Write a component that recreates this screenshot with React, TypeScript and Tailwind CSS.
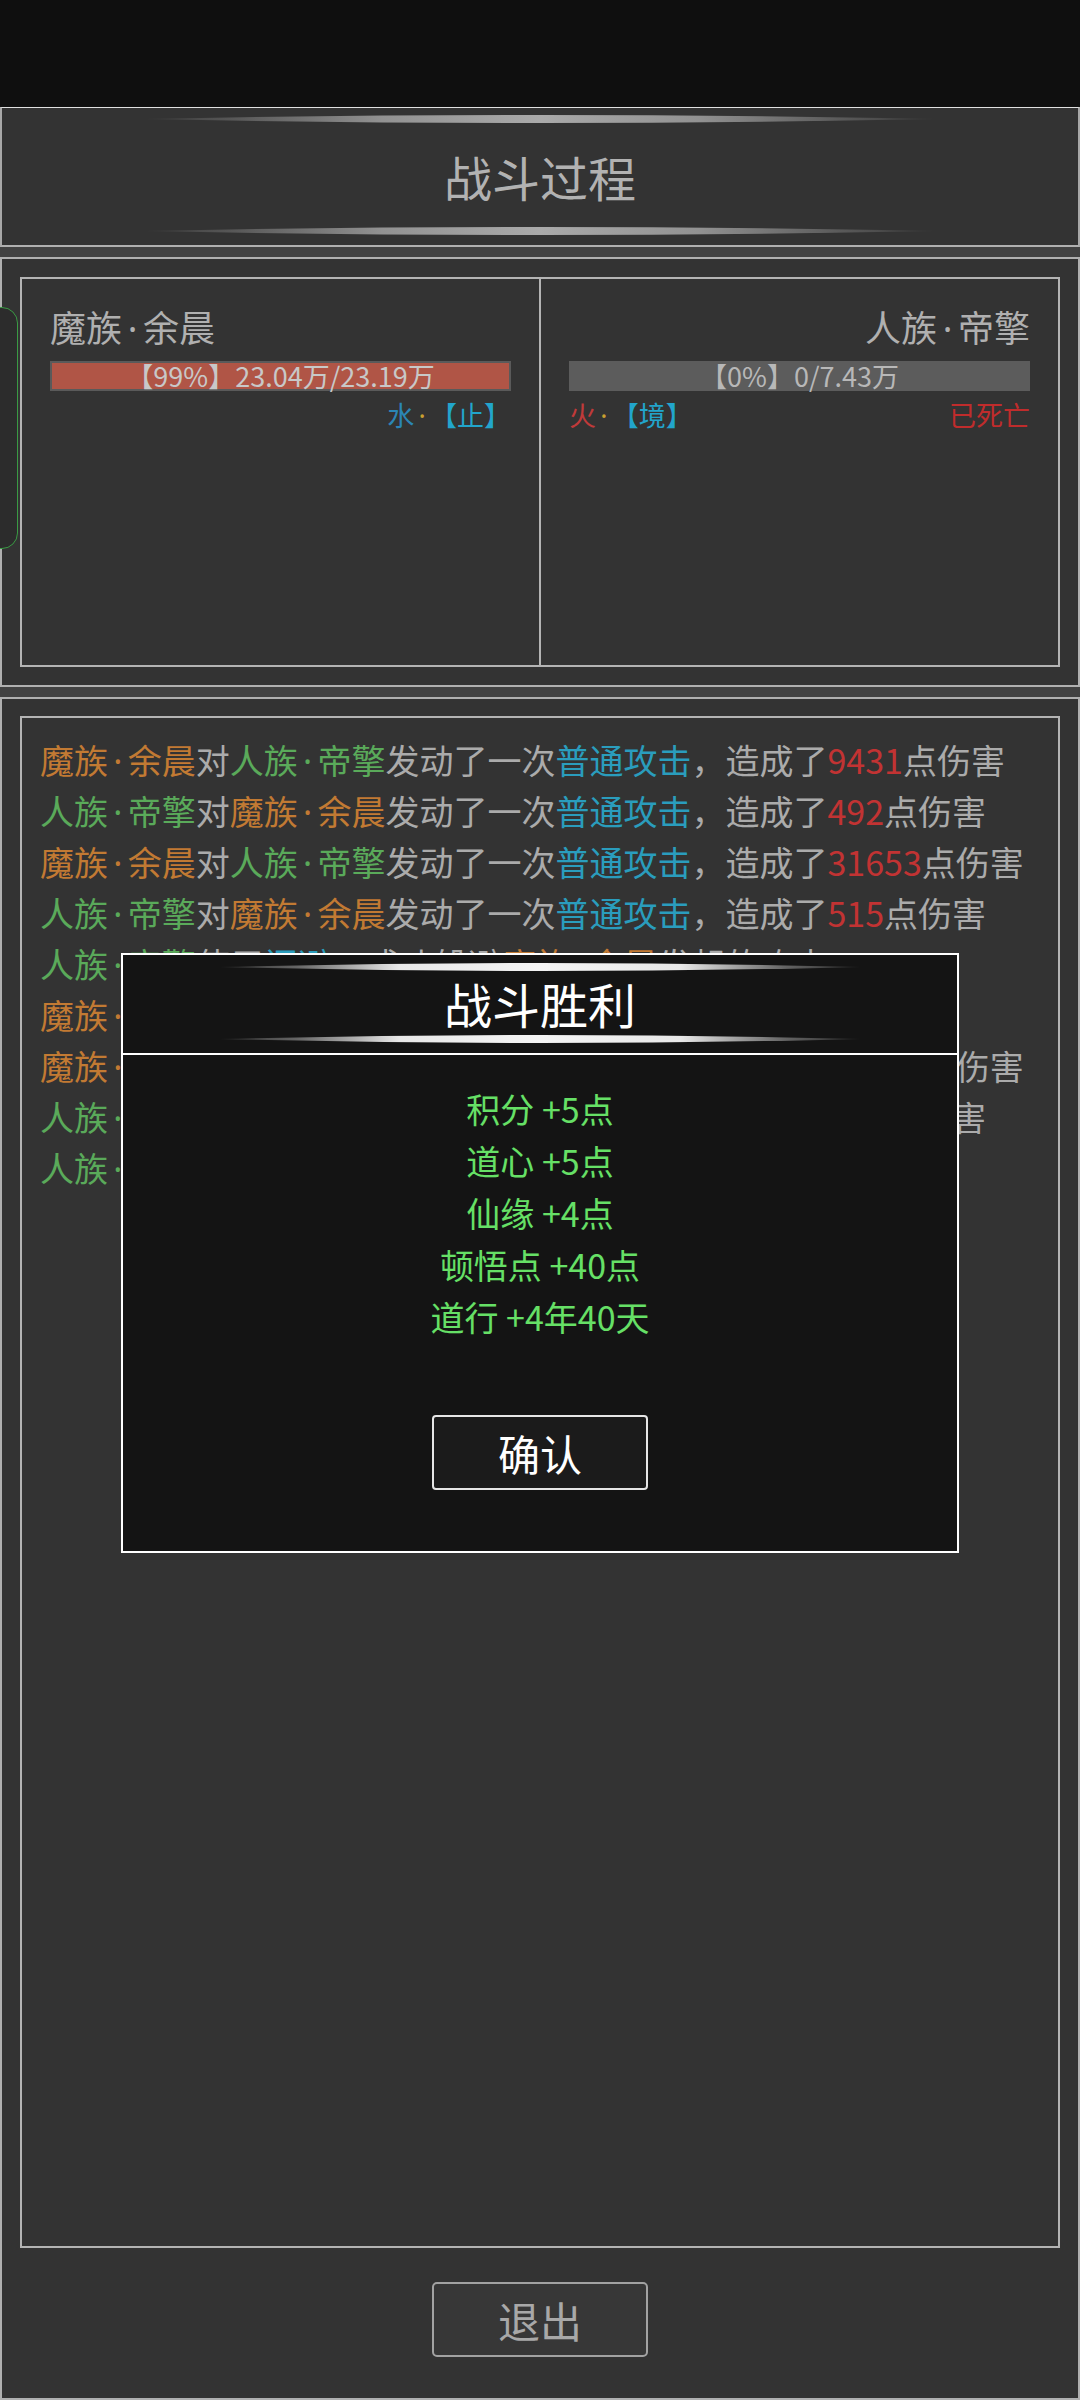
import React from "react";

type Seg = [string, string];

const O = "text-[#c27a33]";
const G = "text-[#5aaa5a]";
const W = "text-[#ababab]";
const C = "text-[#2a9dbd]";
const R = "text-[#c23333]";

const lines: Seg[][] = [
  [[O, "魔族·余晨"], [W, "对"], [G, "人族·帝擎"], [W, "发动了一次"], [C, "普通攻击"], [W, "，造成了"], [R, "9431"], [W, "点伤害"]],
  [[G, "人族·帝擎"], [W, "对"], [O, "魔族·余晨"], [W, "发动了一次"], [C, "普通攻击"], [W, "，造成了"], [R, "492"], [W, "点伤害"]],
  [[O, "魔族·余晨"], [W, "对"], [G, "人族·帝擎"], [W, "发动了一次"], [C, "普通攻击"], [W, "，造成了"], [R, "31653"], [W, "点伤害"]],
  [[G, "人族·帝擎"], [W, "对"], [O, "魔族·余晨"], [W, "发动了一次"], [C, "普通攻击"], [W, "，造成了"], [R, "515"], [W, "点伤害"]],
  [[G, "人族·帝擎"], [W, "使用"], [C, "闪避"], [W, "，成功躲避"], [O, "魔族·余晨"], [W, "发起的攻击"]],
  [[O, "魔族·余晨"], [W, "恢复了"], [R, "1280"], [W, "点气血"]],
  [[O, "魔族·余晨"], [W, "对"], [G, "人族·帝擎"], [W, "发动了一次"], [C, "普通攻击"], [W, "，造成了"], [R, "28765"], [W, "点伤害"]],
  [[G, "人族·帝擎"], [W, "对"], [O, "魔族·余晨"], [W, "发动了一次"], [C, "普通攻击"], [W, "，造成了"], [R, "503"], [W, "点伤害"]],
  [[G, "人族·帝擎"], [W, "气血耗尽，已死亡"]],
];

function Lens({ w, h, id, stops }: { w: number; h: number; id: string; stops: [string, string][] }) {
  const m = h / 2;
  return (
    <svg width={w} height={h} viewBox={`0 0 ${w} ${h}`} className="block">
      <defs>
        <linearGradient id={id} x1="0" y1="0" x2="1" y2="0">
          {stops.map(([o, c]) => (
            <stop key={o} offset={o} stopColor={c} />
          ))}
        </linearGradient>
      </defs>
      <path
        d={`M0 ${m} Q ${w / 2} ${-m} ${w} ${m} Q ${w / 2} ${h + m} 0 ${m} Z`}
        fill={`url(#${id})`}
      />
    </svg>
  );
}

const grayStops: [string, string][] = [
  ["0", "#3a3a3a"],
  ["0.12", "#5a5a5a"],
  ["0.3", "#929292"],
  ["0.5", "#aaaaaa"],
  ["0.7", "#929292"],
  ["0.88", "#5a5a5a"],
  ["1", "#3a3a3a"],
];

const whiteStops: [string, string][] = [
  ["0", "#2a2a2a"],
  ["0.12", "#666666"],
  ["0.28", "#e8e8e8"],
  ["0.5", "#f4f4f4"],
  ["0.72", "#e8e8e8"],
  ["0.88", "#666666"],
  ["1", "#2a2a2a"],
];

function Dot({ cls }: { cls: string }) {
  return (
    <span className={`inline-block w-[0.58em] text-center leading-[1] font-['Noto_Sans',sans-serif] ${cls}`}>·</span>
  );
}

function Name({ text, cls }: { text: string; cls: string }) {
  const [a, b] = text.split("·");
  return (
    <span className={cls}>
      {a}
      <Dot cls={cls} />
      {b}
    </span>
  );
}

export default function App() {
  return (
    <div className="relative w-[1080px] h-[2400px] overflow-hidden bg-[#424242] font-['Noto_Sans_CJK_SC','Noto_Sans',sans-serif]">
      <div className="h-[107px] bg-[#0f0f0f]" />

      {/* header */}
      <div className="h-[140px] bg-[#333333] border-x-2 border-b-2 border-t border-x-[#a8a8a8] border-b-[#b0b0b0] border-t-[#e0e0e0] flex flex-col items-center">
        <div className="mt-[7px]">
          <Lens w={790} h={8} id="hl1" stops={grayStops} />
        </div>
        <div className="mt-[17px] h-[72px] leading-[72px] text-[48px] text-[#b2b2b2]">战斗过程</div>
        <div className="mt-[15px]">
          <Lens w={790} h={8} id="hl2" stops={grayStops} />
        </div>
      </div>

      {/* fighters */}
      <div className="mt-[10px] h-[430px] bg-[#333333] border-2 border-[#b0b0b0] p-[18px]">
        <div className="relative h-[390px] border-2 border-[#b4b4b4] flex">
          <div className="flex-1 border-r-2 border-[#b4b4b4] px-[28px] pt-[20px]">
            <div className="h-[54px] text-[36px] leading-[54px] text-[#b0b0b0]">
              <Name text="魔族·余晨" cls="" />
            </div>
            <div className="mt-[8px] h-[30px] bg-[#b05546] border-2 border-[#5a5a5a] flex items-center justify-center text-[27px] leading-[26px] text-[#c8c8c8]">
              【99%】23.04万/23.19万
            </div>
            <div className="mt-[6px] h-[36px] flex justify-end items-baseline text-[27px] leading-[36px]">
              <span className="text-[#2b86b6]">水</span>
              <Dot cls="text-[#c9a030]" />
              <span className="text-[#22a5cc]">【止】</span>
            </div>
          </div>
          <div className="flex-1 px-[28px] pt-[20px]">
            <div className="h-[54px] text-[36px] leading-[54px] text-[#b0b0b0] text-right">
              <Name text="人族·帝擎" cls="" />
            </div>
            <div className="mt-[8px] h-[30px] bg-[#5c5c5c] flex items-center justify-center text-[27px] leading-[26px] text-[#b8b8b8]">
              【0%】0/7.43万
            </div>
            <div className="mt-[6px] h-[36px] flex justify-between items-baseline text-[27px] leading-[36px]">
              <div className="flex items-baseline">
                <span className="text-[#c03a3a]">火</span>
                <Dot cls="text-[#c9a030]" />
                <span className="text-[#22a5cc]">【境】</span>
              </div>
              <span className="text-[#c02c2c]">已死亡</span>
            </div>
          </div>
        </div>
      </div>

      {/* green side tab */}
      <div className="absolute left-[-22px] top-[307px] w-[40px] h-[242px] rounded-[16px] border border-[#3a9a44] bg-[#2c2c2c]" />

      {/* log */}
      <div className="mt-[10px] h-[1703px] bg-[#333333] border-2 border-[#b0b0b0] pt-[17px] px-[18px] flex flex-col items-center">
        <div className="w-full h-[1532px] border-2 border-[#b4b4b4] pt-[16px] pl-[18px] text-[34px] leading-[51px]">
          {lines.map((segs, i) => (
            <div key={i} className="h-[51px] whitespace-nowrap">
              {segs.map(([cls, t], j) =>
                t.includes("·") ? (
                  <Name key={j} text={t} cls={cls} />
                ) : (
                  <span key={j} className={cls}>
                    {t}
                  </span>
                )
              )}
            </div>
          ))}
        </div>
        <button className="mt-[34px] w-[216px] h-[75px] rounded-[5px] border-2 border-[#a2a2a2] bg-[#373737] text-[42px] leading-[42px] text-[#a8a8a8] font-['Noto_Sans_CJK_SC',sans-serif]">
          退出
        </button>
      </div>

      {/* victory modal */}
      <div className="absolute left-[121px] top-[953px] w-[838px] h-[600px] border-2 border-white bg-[#141414] flex flex-col">
        <div className="h-[100px] border-b-2 border-white flex flex-col items-center">
          <div className="mt-[8px]">
            <Lens w={640} h={8} id="ml1" stops={whiteStops} />
          </div>
          <div className="mt-[2px] h-[60px] leading-[60px] text-[48px] text-white">战斗胜利</div>
          <div className="mt-[2px]">
            <Lens w={640} h={8} id="ml2" stops={whiteStops} />
          </div>
        </div>
        <div className="flex flex-col items-center pt-[28px]">
          {["积分 +5点", "道心 +5点", "仙缘 +4点", "顿悟点 +40点", "道行 +4年40天"].map((t) => (
            <div key={t} className="text-[34px] leading-[52px] text-[#66e066]">
              {t}
            </div>
          ))}
          <button className="mt-[72px] w-[216px] h-[75px] rounded-[4px] border-2 border-[#e6e6e6] bg-[#1b1b1b] text-[42px] leading-[42px] text-white font-['Noto_Sans_CJK_SC',sans-serif]">
            确认
          </button>
        </div>
      </div>
    </div>
  );
}
